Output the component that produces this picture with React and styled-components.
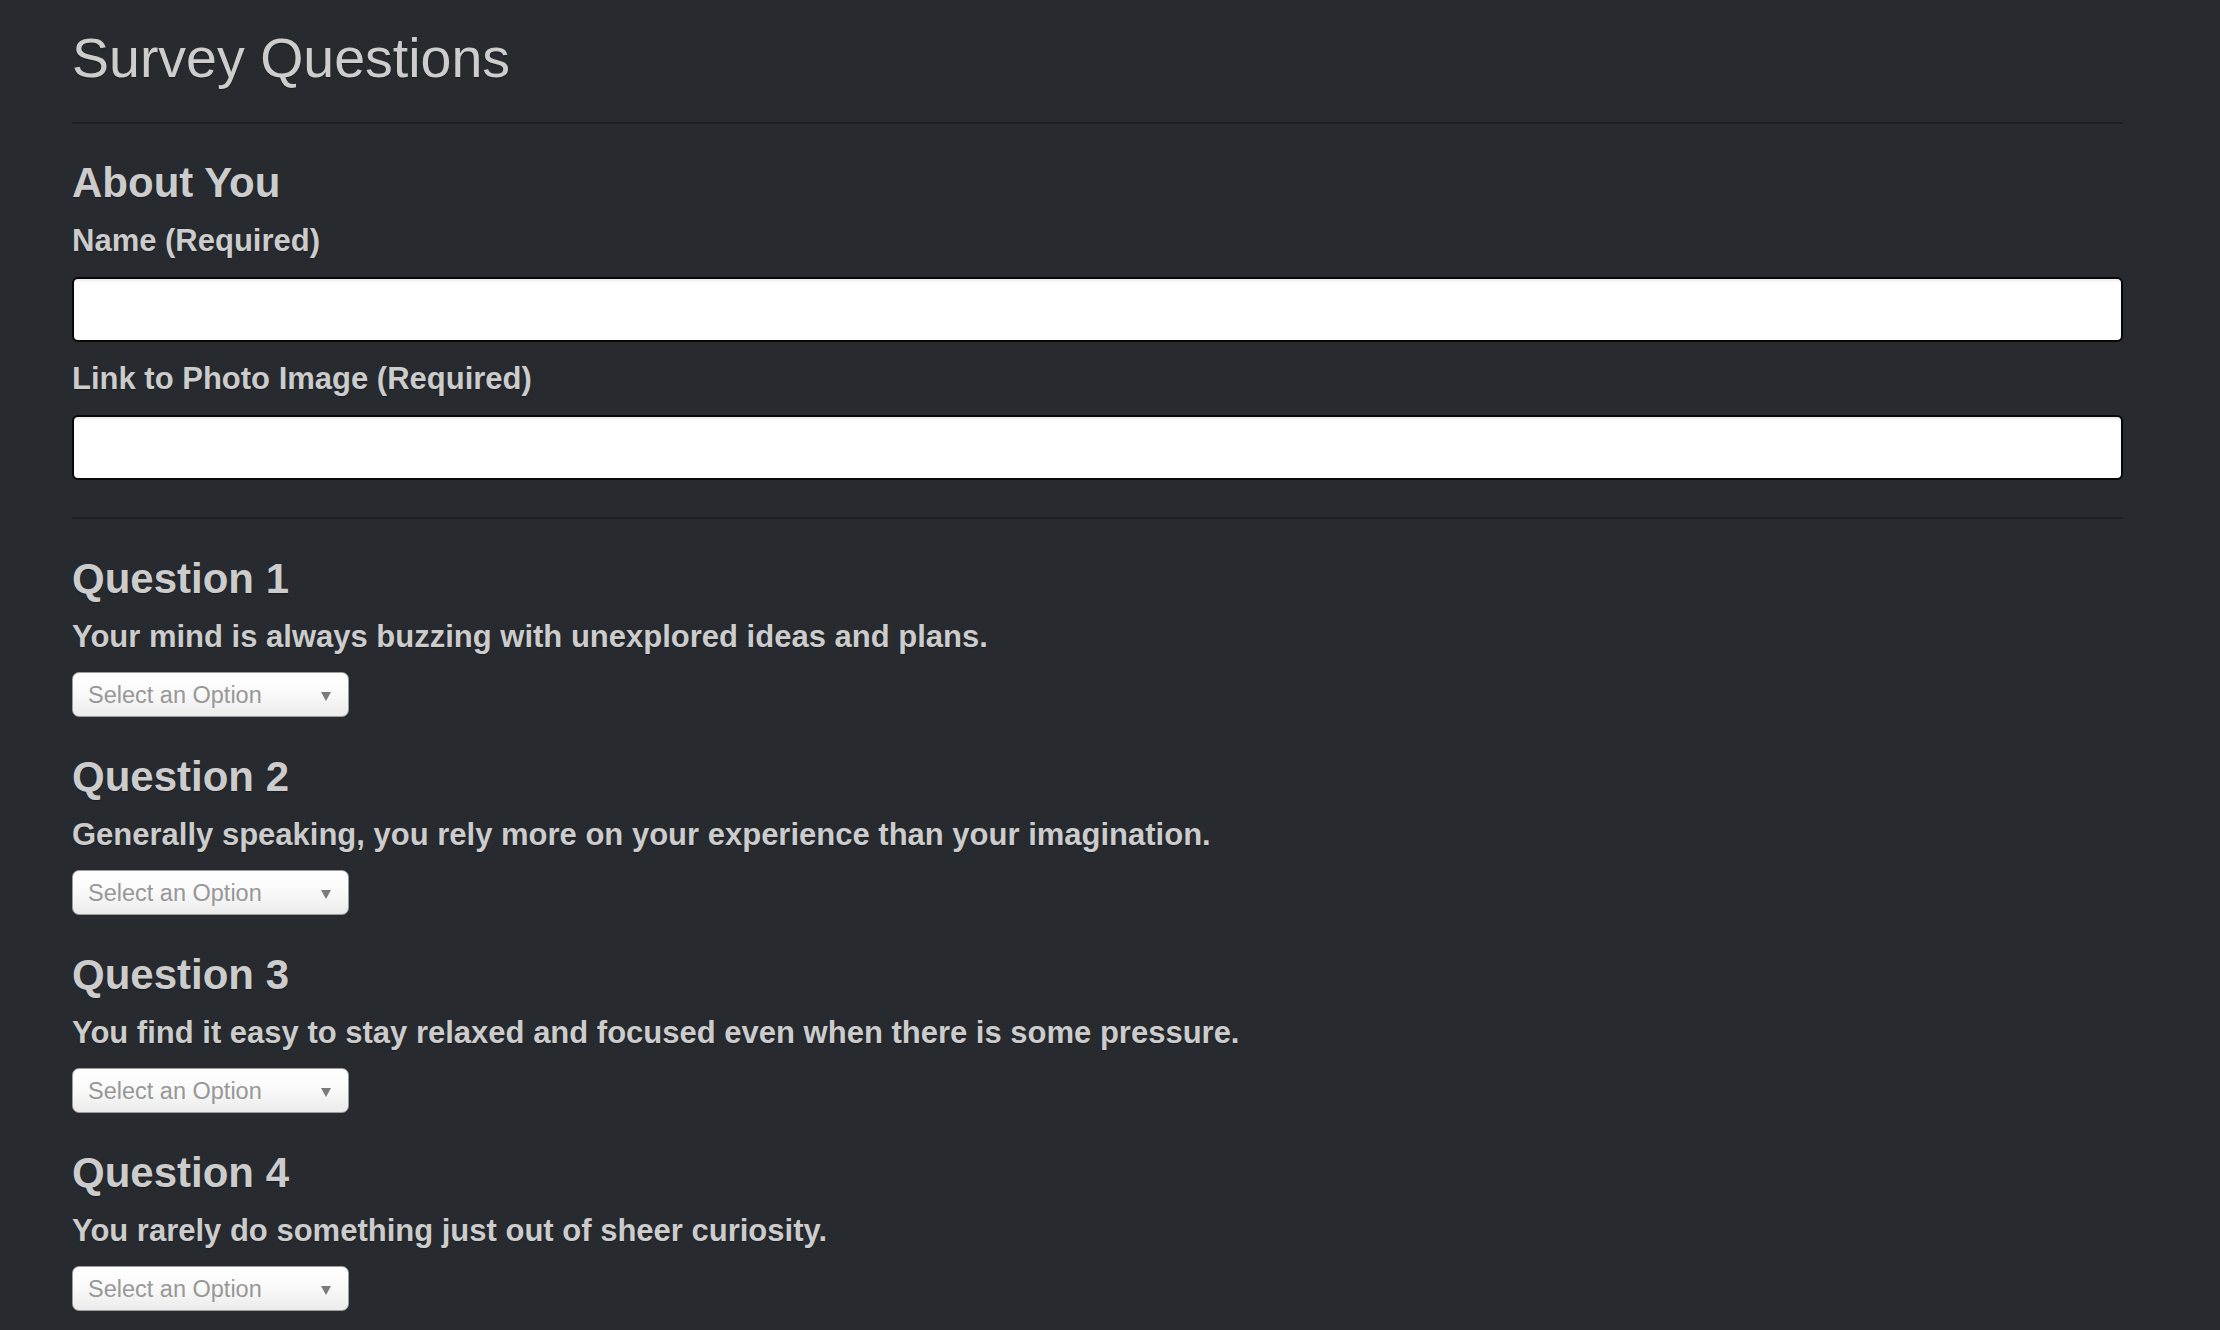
import React from 'react';
import styled, { createGlobalStyle } from 'styled-components';

const GlobalStyle = createGlobalStyle`
  html, body {
    margin: 0;
    padding: 0;
    background: #272a2f;
  }
  body {
    font-family: 'Liberation Sans', Arial, Helvetica, sans-serif;
    color: #cccccc;
  }
  * {
    box-sizing: border-box;
  }
`;

const Page = styled.div`
  padding: 27px 97px 40px 72px;
`;

const Title = styled.h1`
  margin: 0;
  font-size: 55.5px;
  line-height: 62px;
  font-weight: 400;
  color: #cdcdcd;
  text-shadow: 0 1px 1px rgba(0, 0, 0, 0.35);
`;

const Divider = styled.hr`
  margin: ${props => props.top}px 0 0;
  border: none;
  border-top: 2px solid #1d1f23;
  height: 0;
`;

const Section = styled.section`
  display: flex;
  flex-direction: column;
`;

const Heading = styled.h3`
  margin: ${props => props.top || 37}px 0 0;
  font-size: 42px;
  line-height: 46px;
  font-weight: 700;
  color: #cccccc;
  text-shadow: 0 1px 1px rgba(0, 0, 0, 0.35);
`;

const Label = styled.label`
  display: block;
  margin-top: ${props => props.top || 18}px;
  font-size: 31px;
  line-height: 34px;
  font-weight: 700;
  color: #cccccc;
  text-shadow: 0 1px 1px rgba(0, 0, 0, 0.3);
`;

const TextInput = styled.input`
  display: block;
  width: 100%;
  height: 65px;
  margin-top: 19px;
  padding: 0 18px;
  border: 2px solid #080808;
  border-radius: 6px;
  background: #ffffff;
  box-shadow: inset 0 2px 2px rgba(0, 0, 0, 0.08);
  font-family: inherit;
  font-size: 28px;
  color: #333;
  outline: none;
`;

const SelectWrap = styled.div`
  position: relative;
  width: 277px;
  height: 45px;
  margin-top: 18px;
`;

const Select = styled.select`
  appearance: none;
  -webkit-appearance: none;
  width: 100%;
  height: 100%;
  margin: 0;
  padding: 0 40px 0 15px;
  border: 1.5px solid #9c9c9c;
  border-radius: 7px;
  background: linear-gradient(#ffffff 0%, #fafafa 45%, #ebebeb 100%);
  font-family: 'Liberation Sans', Arial, sans-serif;
  font-size: 23.5px;
  color: #979797;
  outline: none;
`;

const Caret = styled.svg`
  position: absolute;
  top: 20px;
  left: 249px;
  width: 10px;
  height: 9px;
  pointer-events: none;
`;

const questions = [
  'Your mind is always buzzing with unexplored ideas and plans.',
  'Generally speaking, you rely more on your experience than your imagination.',
  'You find it easy to stay relaxed and focused even when there is some pressure.',
  'You rarely do something just out of sheer curiosity.',
];

const choices = [
  '1 (Strongly Disagree)',
  '2',
  '3',
  '4',
  '5 (Strongly Agree)',
];

function OptionSelect({ id }) {
  return (
    <SelectWrap>
      <Select id={id} defaultValue="">
        <option value="" disabled>Select an Option</option>
        {choices.map(c => (
          <option key={c} value={c}>{c}</option>
        ))}
      </Select>
      <Caret viewBox="0 0 10 9">
        <path d="M0 0 L10 0 L5 9 Z" fill="#7a7a7a" />
      </Caret>
    </SelectWrap>
  );
}

export default function App() {
  return (
    <>
      <GlobalStyle />
      <Page>
        <Title>Survey Questions</Title>
        <Divider top={33} />

        <Section>
          <Heading top={36}>About You</Heading>
          <Label htmlFor="name">Name (Required)</Label>
          <TextInput id="name" type="text" />
          <Label htmlFor="photo" top={20}>Link to Photo Image (Required)</Label>
          <TextInput id="photo" type="text" />
        </Section>

        <Divider top={37} />

        {questions.map((q, i) => (
          <Section key={i}>
            <Heading>Question {i + 1}</Heading>
            <Label htmlFor={`q${i + 1}`}>{q}</Label>
            <OptionSelect id={`q${i + 1}`} />
          </Section>
        ))}
      </Page>
    </>
  );
}
